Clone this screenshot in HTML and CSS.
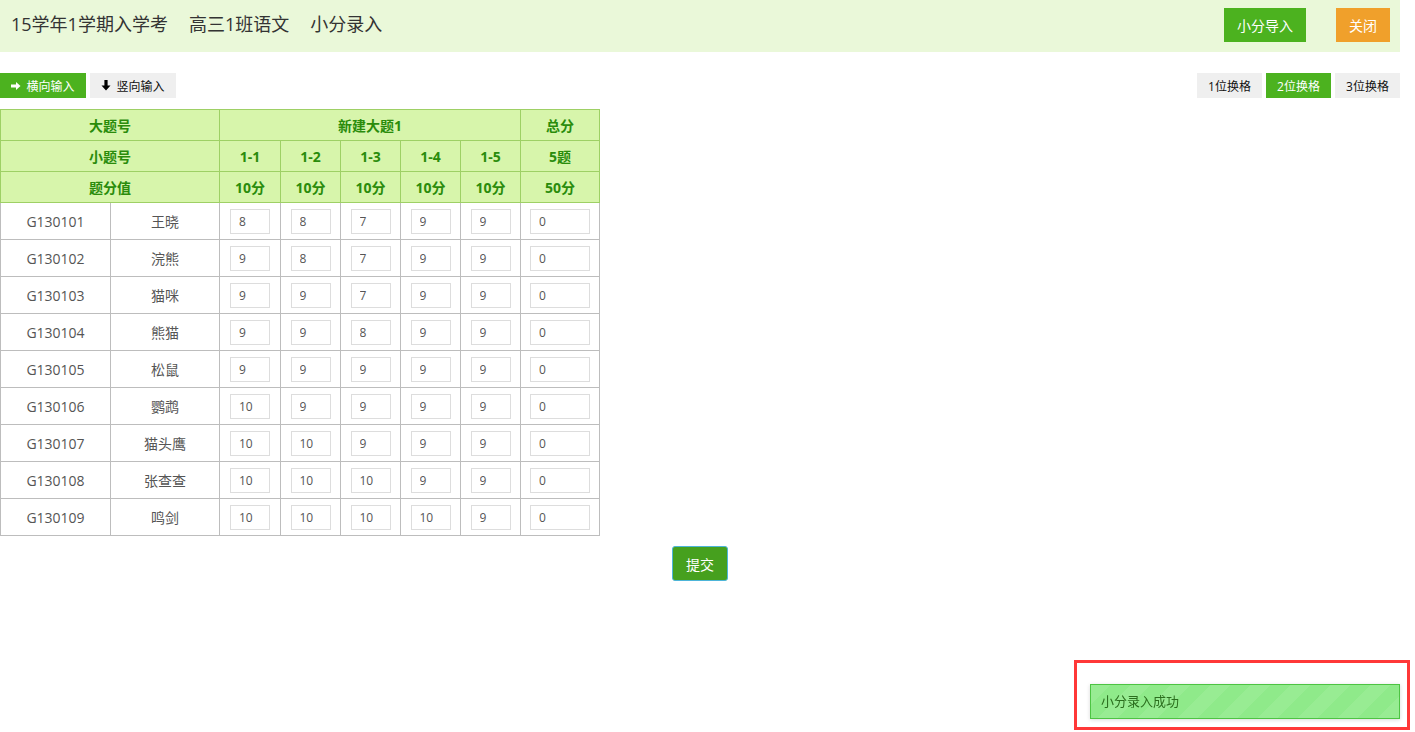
FILE: index.html
```html
<!DOCTYPE html>
<html lang="zh-CN">

<head>
    <meta charset="UTF-8">
    <title>小分录入</title>
    <link rel="stylesheet" href="styles.css">
</head>

<body>
    <div class="page">
        <!-- Header -->
        <div class="header">
            <h1 class="title">15学年1学期入学考<span>高三1班语文</span><span>小分录入</span></h1>
            <div class="header-actions">
                <button class="btn btn-green">小分导入</button>
                <button class="btn btn-orange">关闭</button>
            </div>
        </div>

        <!-- Toolbar -->
        <div class="toolbar">
            <div class="toolbar-group">
                <button class="tool active">
                    <svg width="10" height="10" viewBox="0 0 10 10"><path d="M0 3.6h5V1l4.5 4-4.5 4V6.4H0z" fill="#fff"/></svg>
                    横向输入
                </button>
                <button class="tool">
                    <svg width="10" height="11" viewBox="0 0 10 11"><path d="M3.4 0h3.2v5.5H9.5L5 10.5 0.5 5.5h2.9z" fill="#000"/></svg>
                    竖向输入
                </button>
            </div>
            <div class="toolbar-group">
                <button class="tool">1位换格</button>
                <button class="tool active">2位换格</button>
                <button class="tool">3位换格</button>
            </div>
        </div>

        <!-- Score table -->
        <table class="score-table">
            <colgroup>
                <col class="col-id">
                <col class="col-name">
                <col class="col-item col-first">
                <col class="col-item">
                <col class="col-item">
                <col class="col-item">
                <col class="col-item">
                <col class="col-total">
            </colgroup>
            <thead>
                <tr>
                    <th colspan="2">大题号</th>
                    <th colspan="5">新建大题1</th>
                    <th>总分</th>
                </tr>
                <tr>
                    <th colspan="2">小题号</th>
                    <th>1-1</th>
                    <th>1-2</th>
                    <th>1-3</th>
                    <th>1-4</th>
                    <th>1-5</th>
                    <th>5题</th>
                </tr>
                <tr>
                    <th colspan="2">题分值</th>
                    <th>10分</th>
                    <th>10分</th>
                    <th>10分</th>
                    <th>10分</th>
                    <th>10分</th>
                    <th>50分</th>
                </tr>
            </thead>
            <tbody>
                <tr>
                    <td>G130101</td><td>王晓</td>
                    <td><input value="8"></td><td><input value="8"></td><td><input value="7"></td><td><input value="9"></td><td><input value="9"></td>
                    <td><input class="total" value="0"></td>
                </tr>
                <tr>
                    <td>G130102</td><td>浣熊</td>
                    <td><input value="9"></td><td><input value="8"></td><td><input value="7"></td><td><input value="9"></td><td><input value="9"></td>
                    <td><input class="total" value="0"></td>
                </tr>
                <tr>
                    <td>G130103</td><td>猫咪</td>
                    <td><input value="9"></td><td><input value="9"></td><td><input value="7"></td><td><input value="9"></td><td><input value="9"></td>
                    <td><input class="total" value="0"></td>
                </tr>
                <tr>
                    <td>G130104</td><td>熊猫</td>
                    <td><input value="9"></td><td><input value="9"></td><td><input value="8"></td><td><input value="9"></td><td><input value="9"></td>
                    <td><input class="total" value="0"></td>
                </tr>
                <tr>
                    <td>G130105</td><td>松鼠</td>
                    <td><input value="9"></td><td><input value="9"></td><td><input value="9"></td><td><input value="9"></td><td><input value="9"></td>
                    <td><input class="total" value="0"></td>
                </tr>
                <tr>
                    <td>G130106</td><td>鹦鹉</td>
                    <td><input value="10"></td><td><input value="9"></td><td><input value="9"></td><td><input value="9"></td><td><input value="9"></td>
                    <td><input class="total" value="0"></td>
                </tr>
                <tr>
                    <td>G130107</td><td>猫头鹰</td>
                    <td><input value="10"></td><td><input value="10"></td><td><input value="9"></td><td><input value="9"></td><td><input value="9"></td>
                    <td><input class="total" value="0"></td>
                </tr>
                <tr>
                    <td>G130108</td><td>张查查</td>
                    <td><input value="10"></td><td><input value="10"></td><td><input value="10"></td><td><input value="9"></td><td><input value="9"></td>
                    <td><input class="total" value="0"></td>
                </tr>
                <tr>
                    <td>G130109</td><td>鸣剑</td>
                    <td><input value="10"></td><td><input value="10"></td><td><input value="10"></td><td><input value="10"></td><td><input value="9"></td>
                    <td><input class="total" value="0"></td>
                </tr>
            </tbody>
        </table>

        <div class="submit-row">
            <button class="btn-submit">提交</button>
        </div>
    </div>

    <!-- Success toast -->
    <div class="toast-frame">
        <div class="toast">小分录入成功</div>
    </div>
</body>

</html>
```

FILE: styles.css
```css
body {
    margin: 0;
    font-family: "Open Sans", "Noto Sans CJK SC", sans-serif;
    color: #333;
    background: #fff;
}

button {
    font-family: inherit;
    cursor: pointer;
}

.page {
    width: 1400px;
}

/* Header */
.header {
    height: 52px;
    background: #eaf8d9;
    display: flex;
    align-items: center;
    justify-content: space-between;
    padding: 0 10px 0 11px;
}

.title {
    margin: 0;
    font-size: 18px;
    font-weight: normal;
    color: #333;
    position: relative;
    top: -3px;
}

.title span {
    margin-left: 21px;
}

.header-actions {
    display: flex;
    gap: 30px;
    position: relative;
    top: -1px;
}

.btn {
    height: 34px;
    border: none;
    color: #fff;
    font-size: 14px;
    padding: 0 12px;
}

.btn-green {
    background: #4cb21f;
    width: 82px;
}

.btn-orange {
    background: #f0a02b;
    width: 54px;
}

/* Toolbar */
.toolbar {
    display: flex;
    justify-content: space-between;
    margin-top: 21px;
}

.toolbar-group {
    display: flex;
    gap: 4px;
}

.tool {
    height: 25px;
    border: none;
    background: #efefef;
    color: #111;
    font-size: 12px;
    padding: 0 11px;
    display: flex;
    align-items: center;
    justify-content: center;
    gap: 5px;
    min-width: 65px;
}

.toolbar-group:first-child .tool {
    width: 86px;
}

.tool.active {
    background: #4cb21f;
    color: #fff;
}

/* Table */
.score-table {
    margin-top: 11px;
    border-collapse: collapse;
    width: 600px;
    font-size: 14px;
    table-layout: fixed;
}

.col-id {
    width: 110px;
}

.col-name {
    width: 109px;
}

.col-item {
    width: 60px;
}

.col-item.col-first {
    width: 61px;
}

.col-total {
    width: 79px;
}

.score-table th {
    background: #d7f5ab;
    border: 1px solid #9ed065;
    color: #2a8c0b;
    font-weight: bold;
    height: 30px;
    padding: 0;
}

.score-table td {
    border: 1px solid #bdbdbd;
    color: #555;
    text-align: center;
    height: 36px;
    padding: 0;
}

.score-table input {
    width: 40px;
    height: 25px;
    box-sizing: border-box;
    border: 1px solid #ddd;
    font-family: inherit;
    font-size: 12px;
    color: #555;
    padding: 0 0 0 8px;
    outline: none;
}

.score-table input.total {
    width: 60px;
}

.submit-row {
    display: flex;
    justify-content: center;
    margin-top: 10px;
}

.btn-submit {
    width: 56px;
    height: 35px;
    background: #46a01e;
    border: 1px solid #4db5d9;
    border-radius: 3px;
    color: #fff;
    font-size: 14px;
}

/* Toast */
.toast-frame {
    position: fixed;
    left: 1074px;
    top: 660px;
    width: 336px;
    height: 70px;
    border: 3px solid #ff3838;
    padding: 21px 7px 8px 13px;
    box-sizing: border-box;
}

.toast {
    height: 35px;
    box-sizing: border-box;
    border: 1px solid #4dc443;
    background-color: #8fea8a;
    background-image: linear-gradient(135deg, rgba(255, 255, 255, 0.08) 25%, transparent 25%, transparent 50%, rgba(255, 255, 255, 0.08) 50%, rgba(255, 255, 255, 0.08) 75%, transparent 75%, transparent);
    background-size: 40px 40px;
    box-shadow: 0 1px 4px rgba(0, 0, 0, 0.15);
    color: #2b6e1e;
    font-size: 13px;
    line-height: 33px;
    padding-left: 10px;
}
```
